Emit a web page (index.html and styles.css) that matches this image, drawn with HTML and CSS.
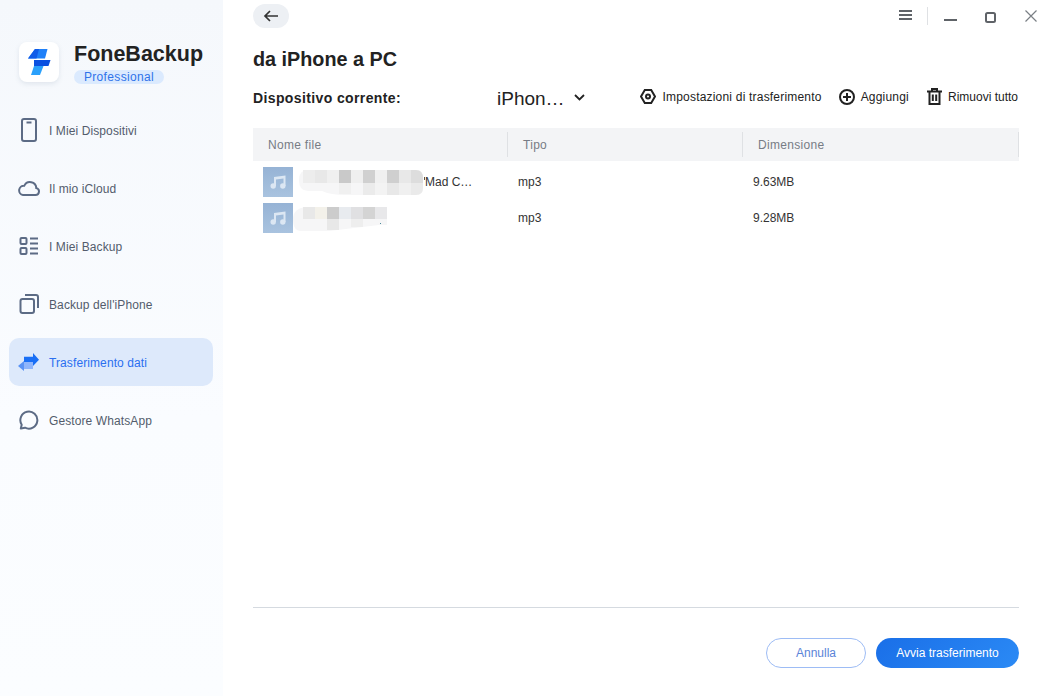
FILE: index.html
```html
<!DOCTYPE html>
<html lang="it">
<head>
<meta charset="utf-8">
<title>FoneBackup</title>
<link rel="stylesheet" href="styles.css">
</head>
<body>
<div class="app">
  <aside class="sidebar">
    <div class="brand">
      <div class="logo">
        <svg width="24" height="28" viewBox="0 0 24 28">
          <path d="M8 1H20.500L18 10.500H1Z" fill="#1f80f8"/>
          <path d="M8 1H12L9.500 10.500H1Z" fill="#0f5be8"/>
          <path d="M7 12H23.500L21.500 18H7Z" fill="#0a50e0"/>
          <path d="M7 18H16.500L13 27H4Z" fill="#2aa0fb"/>
        </svg>
      </div>
      <div class="brand-text">
        <div class="brand-name">FoneBackup</div>
        <div class="brand-badge">Professional</div>
      </div>
    </div>
    <nav class="nav">
      <a class="nav-item">
        <span class="icon-box"><svg width="16" height="24" viewBox="0 0 16 24" fill="none" stroke="#5c6b85" stroke-width="2"><rect x="1" y="1" width="14" height="22" rx="2"/><path d="M5.500 4.500h5"/></svg></span>
        <span class="nav-label">I Miei Dispositivi</span>
      </a>
      <a class="nav-item">
        <span class="icon-box"><svg width="22" height="16" viewBox="0 0 22 16" fill="none" stroke="#5c6b85" stroke-width="2"><path d="M5 15h12.500a3.500 3.500 0 0 0 .8-6.900A6.300 6.300 0 0 0 6.300 5.700 4.700 4.700 0 0 0 5 15z"/></svg></span>
        <span class="nav-label">Il mio iCloud</span>
      </a>
      <a class="nav-item">
        <span class="icon-box"><svg width="20" height="18" viewBox="0 0 20 18" fill="none" stroke="#5c6b85" stroke-width="2"><rect x="1.500" y="1" width="6" height="6" rx="1"/><rect x="1.500" y="11" width="6" height="6" rx="1"/><path d="M11 1.500h8M11 6.500h8M11 11.500h8M11 16.500h8"/></svg></span>
        <span class="nav-label">I Miei Backup</span>
      </a>
      <a class="nav-item">
        <span class="icon-box"><svg width="20" height="20" viewBox="0 0 20 20" fill="none" stroke="#5c6b85" stroke-width="2"><rect x="1.500" y="5" width="13.500" height="14" rx="2"/><path d="M6 1h11a2 2 0 0 1 2 2v11"/></svg></span>
        <span class="nav-label">Backup dell'iPhone</span>
      </a>
      <a class="nav-item active">
        <span class="icon-box"><svg width="22" height="20" viewBox="0 0 22 20"><path d="M6 10H15V17H6Z" fill="#8fb5fb"/><path d="M6 9L0 14L6 19Z" fill="#5a93f5"/><path d="M6 4.700H15V1L21 7.700L15 14V10H6Z" fill="#1a6ff5"/></svg></span>
        <span class="nav-label">Trasferimento dati</span>
      </a>
      <a class="nav-item">
        <span class="icon-box"><svg width="20" height="20" viewBox="0 0 20 20" fill="none" stroke="#5c6b85" stroke-width="2"><path d="M1.800 18.500l.9-3.800A8.500 8.500 0 1 1 6 17.700z" stroke-linejoin="round"/></svg></span>
        <span class="nav-label">Gestore WhatsApp</span>
      </a>
    </nav>
  </aside>

  <main class="main">
    <header class="topbar">
      <button class="back" aria-label="Indietro">
        <svg width="16" height="12" viewBox="0 0 16 12" fill="none" stroke="#333" stroke-width="1.700"><path d="M15 6H2M7 1L2 6l5 5"/></svg>
      </button>
      <div class="win-controls">
        <svg class="win-menu" width="13" height="10" viewBox="0 0 13 10" fill="none" stroke="#5f6368" stroke-width="2"><path d="M0 1h13M0 5h13M0 9h13"/></svg>
        <span class="win-sep"></span>
        <svg width="14" height="14" viewBox="0 0 14 14" fill="none" stroke="#5f6368" stroke-width="2"><path d="M0 11h13"/></svg>
        <svg class="win-max" width="11" height="11" viewBox="0 0 11 11" fill="none" stroke="#5f6368" stroke-width="2"><rect x="1" y="1" width="9" height="9" rx="1.500"/></svg>
        <svg class="win-close" width="12" height="12" viewBox="0 0 12 12" fill="none" stroke="#7a7f85" stroke-width="1.200"><path d="M.5.500l11 11M11.500.500l-11 11"/></svg>
      </div>
    </header>

    <h1 class="title">da iPhone a PC</h1>

    <div class="toolbar">
      <span class="device-label">Dispositivo corrente:</span>
      <span class="device-select">
        <span class="device-name">iPhon…</span>
        <svg width="11" height="7" viewBox="0 0 11 7" fill="none" stroke="#222" stroke-width="1.800"><path d="M1 1l4.500 4.500L10 1"/></svg>
      </span>
      <div class="actions">
        <span class="action">
          <svg width="16" height="15" viewBox="0 0 16 15" fill="none" stroke="#222" stroke-width="2"><path d="M4.800 1h6.400L15 7.500 11.200 14H4.800L1 7.500z"/><circle cx="8" cy="7.500" r="2"/></svg>
          Impostazioni di trasferimento
        </span>
        <span class="action">
          <svg width="16" height="16" viewBox="0 0 16 16" fill="none" stroke="#222" stroke-width="2"><circle cx="8" cy="8" r="7"/><path d="M4 8h8M8 4v8"/></svg>
          Aggiungi
        </span>
        <span class="action action-remove">
          <svg width="15" height="17" viewBox="0 0 15 17" fill="none" stroke="#222" stroke-width="2"><path d="M0 3.500h15M5 3V1h5v2M2.500 3.500V16h10V3.500M5.800 6.500v6.500M9.200 6.500v6.500"/></svg>
          Rimuovi tutto
        </span>
      </div>
    </div>

    <section class="table">
      <div class="thead">
        <div class="th">Nome file</div>
        <div class="th">Tipo</div>
        <div class="th">Dimensione</div>
      </div>
      <div class="row">
        <div class="cell cell-name">
          <span class="thumb"><svg width="16" height="16" viewBox="0 0 16 16" fill="#dce7f3"><path d="M4 3L15.500 1.500V12h-2V4.500L6 5.500V12H4Z"/><circle cx="3.200" cy="12" r="2.700"/><circle cx="12.800" cy="12" r="2.700"/></svg></span>
          <svg class="blur blur-a" width="128" height="31" viewBox="0 0 128 31">
            <path d="M10 4H118Q125 4 125 12V22Q125 29 118 29H48Q32 29 24 25H10Q1 25 1 14 1 4 10 4Z" fill="#f6f6f7"/>
            <rect x="5" y="4" width="12" height="13" fill="#ededed"/><rect x="17" y="4" width="12" height="13" fill="#e8e8e8"/><rect x="29" y="4" width="12" height="13" fill="#f0f0f0"/><rect x="41" y="4" width="12" height="13" fill="#c9c9c9"/><rect x="53" y="4" width="12" height="13" fill="#efefef"/><rect x="65" y="4" width="12" height="13" fill="#d0d0d0"/><rect x="77" y="4" width="12" height="13" fill="#f0f0f0"/><rect x="89" y="4" width="12" height="13" fill="#cfcfcf"/><rect x="101" y="4" width="12" height="13" fill="#e8e8e8"/><path d="M113 4H118Q125 4 125 12V17H113Z" fill="#dddddd"/>
            <rect x="41" y="17" width="12" height="11" fill="#f0f0f0"/><rect x="65" y="17" width="12" height="12" fill="#ebebeb"/><rect x="77" y="17" width="12" height="12" fill="#f3f3f3"/><rect x="89" y="17" width="12" height="12" fill="#e8e8e8"/><rect x="101" y="17" width="12" height="12" fill="#f0f0f0"/><path d="M113 17H125V22Q125 29 118 29H113Z" fill="#eaeaea"/>
            <rect x="126" y="11" width="1" height="3" fill="#555"/>
          </svg>
          <span class="name-tail">Mad C…</span>
        </div>
        <div class="cell">mp3</div>
        <div class="cell">9.63MB</div>
      </div>
      <div class="row">
        <div class="cell cell-name">
          <span class="thumb"><svg width="16" height="16" viewBox="0 0 16 16" fill="#dce7f3"><path d="M4 3L15.500 1.500V12h-2V4.500L6 5.500V12H4Z"/><circle cx="3.200" cy="12" r="2.700"/><circle cx="12.800" cy="12" r="2.700"/></svg></span>
          <svg class="blur blur-b" width="94" height="31" viewBox="0 0 94 31">
            <path d="M12 5H94V23L86 23 36 29H8Q0 29 0 17 0 7 12 5Z" fill="#f6f6f7"/>
            <rect x="10" y="5" width="12" height="12" fill="#e8e8e8"/><rect x="22" y="5" width="12" height="12" fill="#f3f1ea"/><rect x="34" y="5" width="12" height="12" fill="#cccccc"/><rect x="46" y="5" width="12" height="12" fill="#e8ebef"/><rect x="58" y="5" width="12" height="12" fill="#e0e0e2"/><rect x="70" y="5" width="12" height="12" fill="#d4d4d4"/><rect x="82" y="5" width="12" height="12" fill="#e8e8ea"/>
            <rect x="34" y="17" width="12" height="11" fill="#e8e8e8"/><rect x="58" y="17" width="12" height="8" fill="#eeeeee"/>
            <rect x="87" y="21" width="1" height="1" fill="#4a8a9a"/>
          </svg>
        </div>
        <div class="cell">mp3</div>
        <div class="cell">9.28MB</div>
      </div>
    </section>

    <footer class="footer">
      <button class="btn btn-ghost">Annulla</button>
      <button class="btn btn-primary">Avvia trasferimento</button>
    </footer>
  </main>
</div>
</body>
</html>
```

FILE: styles.css
```css
* { box-sizing: border-box; }
html, body { margin: 0; height: 100%; }
body {
  background: #fff;
  font-family: "Liberation Sans", Arial, sans-serif;
  font-size: 12px;
  color: #222;
  overflow: hidden;
}
.app { display: flex; width: 1047px; height: 696px; }

.sidebar {
  width: 223px;
  flex: none;
  background: linear-gradient(180deg, #f5f8fc 0%, #fafcff 60%, #fbfdff 100%);
  padding: 42px 10px 0 9px;
}
.brand { display: flex; gap: 15px; padding-left: 10px; height: 42px; }
.logo {
  width: 40px; height: 40px;
  background: #fff;
  border-radius: 8px;
  box-shadow: 0 2px 5px rgba(90, 110, 140, .14);
  display: flex; align-items: center; justify-content: center;
}
.brand-name { font-size: 21.5px; font-weight: 700; line-height: 24px; color: #222; }
.brand-badge {
  width: 90px; height: 14px; margin-top: 4px;
  border-radius: 7px;
  background: #dbeafe;
  color: #2f73ea;
  font-size: 12px; line-height: 14px; text-align: center;
  letter-spacing: .35px;
}
.nav { margin-top: 22px; display: flex; flex-direction: column; gap: 10px; }
.nav-item {
  height: 48px;
  width: 204px;
  display: flex; align-items: center;
  border-radius: 10px;
  color: #535c6c;
  padding-left: 9px;
  letter-spacing: .1px;
}
.nav-label { margin-top: 2px; }
.icon-box { width: 22px; margin-right: 9px; display: flex; justify-content: center; flex: none; }
.nav-item.active { background: #dde9fb; color: #2a6ff0; }

.main { flex: 1; padding: 4px 28px 0 30px; display: flex; flex-direction: column; }
.topbar { display: flex; justify-content: space-between; align-items: flex-start; height: 24px; }
.back {
  width: 36px; height: 24px;
  border: 0; border-radius: 12px;
  background: #edf0f4;
  display: flex; align-items: center; justify-content: center;
  padding: 0;
}
.win-controls { display: flex; align-items: center; margin-right: -18px; height: 24px; }
.win-menu { margin-top: -3px; }
.win-sep { width: 1px; height: 18px; background: #dfe1e4; margin: 0 16px 0 15px; }
.win-max { margin-left: 27px; margin-top: 2px; }
.win-close { margin-left: 29px; }

.title { margin: 20px 0 0; font-size: 19.8px; font-weight: 700; line-height: 22px; color: #222; }
.toolbar { display: flex; align-items: center; height: 24px; margin-top: 15px; }
.device-label { width: 244px; font-size: 14px; font-weight: 700; color: #222; letter-spacing: .38px; margin-top: 2px; }
.device-select { display: flex; align-items: center; gap: 9px; }
.device-name { font-size: 19px; color: #222; margin-top: 4px; }
.actions { margin-left: auto; display: flex; gap: 17px; margin-right: 1px; margin-top: -1px; }
.action { display: flex; align-items: center; gap: 6px; color: #222; white-space: nowrap; letter-spacing: .2px; }
.action-remove { letter-spacing: 0; margin-left: 1px; }

.table { margin-top: 19px; }
.thead, .row { display: grid; grid-template-columns: 255px 235px 1fr; }
.thead { height: 33px; background: #f3f4f6; align-items: center; }
.th {
  height: 25px; line-height: 27px;
  padding-left: 15px;
  color: #777c85;
  border-right: 1px solid #dfe1e4;
  letter-spacing: .3px;
}
.row { height: 36px; align-items: center; padding-top: 5px; }
.row .cell:not(.cell-name) { padding-left: 10px; }
.cell { color: #333; }
.cell-name { display: flex; align-items: center; padding-left: 10px; position: relative; height: 31px; }
.thumb {
  width: 30px; height: 30px; flex: none;
  background: linear-gradient(180deg, #96b3d5, #a9c3df);
  display: flex; align-items: center; justify-content: center;
}
.blur { position: absolute; top: 0; }
.blur-a { left: 45px; }
.blur-b { left: 40px; }
.name-tail { position: absolute; left: 172px; color: #333; }

.footer {
  margin-top: auto;
  height: 89px;
  border-top: 1px solid #d5dae0;
  display: flex; justify-content: flex-end; gap: 10px;
  padding-top: 30px;
}
.btn { height: 30px; border-radius: 15px; font: 12px "Liberation Sans", Arial, sans-serif; padding: 0; }
.btn-ghost { width: 100px; background: #fff; border: 1px solid #9dbcf5; color: #5a83d8; }
.btn-primary { width: 143px; border: 0; color: #fff; background: linear-gradient(135deg, #1a6fe8, #2b8af5); }
```
